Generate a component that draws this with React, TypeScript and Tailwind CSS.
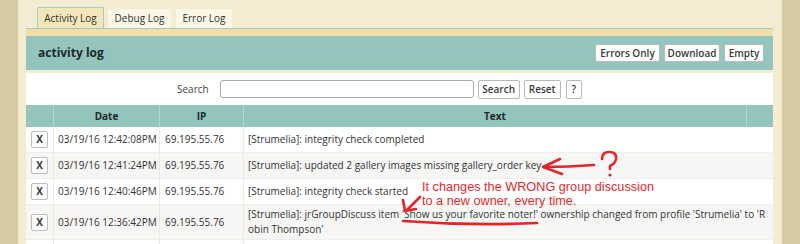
import React from "react";

const rows = [
  { d: "03/19/16 12:42:08PM", ip: "69.195.55.76", t: ["[Strumelia]: integrity check completed"], gray: false, h: "h-[26px]" },
  { d: "03/19/16 12:41:24PM", ip: "69.195.55.76", t: ["[Strumelia]: updated 2 gallery images missing gallery_order key"], gray: true, h: "h-[26px]" },
  { d: "03/19/16 12:40:46PM", ip: "69.195.55.76", t: ["[Strumelia]: integrity check started"], gray: false, h: "h-[26px]" },
  {
    d: "03/19/16 12:36:42PM",
    ip: "69.195.55.76",
    t: [
      "[Strumelia]: jrGroupDiscuss item 'Show us your favorite noter!' ownership changed from profile 'Strumelia' to 'R",
      "obin Thompson'",
    ],
    gray: true,
    h: "h-[35px]",
  },
];

function Btn({ children, w }: { children: React.ReactNode; w: string }) {
  return (
    <div
      className={`${w} h-[18px] bg-white border border-[#b9b9b9] rounded-[2px] flex items-center justify-center text-[10px] font-semibold text-[#3a3a3a] leading-none`}
    >
      {children}
    </div>
  );
}

export default function App() {
  return (
    <div className="relative w-[800px] h-[244px] overflow-hidden flex bg-[#d6cba3] font-['Open_Sans',sans-serif]">
      <div className="w-[18px] shrink-0" />
      <div className="w-[764px] shrink-0 bg-[#f3ecd0] pl-[8px] pr-[9px] flex flex-col">
        {/* tabs */}
        <div className="h-[29px] shrink-0 flex items-end pl-[11px] gap-[4px] border-b border-[#9fcbc3]">
          <div className="w-[67px] h-[21px] bg-[#f3e6b8] border border-b-0 border-[#a3cec5] rounded-t-[2px] flex items-center justify-center text-[10px] text-[#333]">
            Activity Log
          </div>
          <div className="w-[63px] h-[19px] bg-[#fbf7e6] flex items-center justify-center text-[10px] text-[#333]">
            Debug Log
          </div>
          <div className="ml-[1px] w-[56px] h-[19px] bg-[#fbf7e6] flex items-center justify-center text-[10px] text-[#333]">
            Error Log
          </div>
        </div>
        <div className="h-[7px] shrink-0 bg-[#f2dea6]" />
        {/* title bar */}
        <div className="h-[34px] shrink-0 bg-[#93c4bd] flex items-center justify-between pl-[12px] pr-[9px]">
          <div className="text-[12px] font-bold text-[#1f2a2a]">activity log</div>
          <div className="flex gap-[4px]">
            <Btn w="w-[65px]">Errors Only</Btn>
            <Btn w="w-[56px]">Download</Btn>
            <Btn w="w-[40px]">Empty</Btn>
          </div>
        </div>
        <div className="h-[3px] shrink-0" />
        {/* white body */}
        <div className="flex-1 bg-white flex flex-col">
          <div className="h-[32px] shrink-0 flex items-center pl-[151px]">
            <span className="text-[10px] text-[#444]">Search</span>
            <div className="ml-[11px] w-[254px] h-[18px] border border-[#ababab] rounded-[3px] bg-white" />
            <div className="ml-[4px] flex gap-[4px]">
              <div className="w-[42px] h-[19px] border border-[#b9b9b9] rounded-[2px] flex items-center justify-center text-[10px] font-semibold text-[#3a3a3a]">
                Search
              </div>
              <div className="w-[37px] h-[19px] border border-[#b9b9b9] rounded-[2px] flex items-center justify-center text-[10px] font-semibold text-[#3a3a3a]">
                Reset
              </div>
              <div className="ml-[1px] w-[16px] h-[19px] border border-[#b9b9b9] rounded-[2px] flex items-center justify-center text-[10px] font-semibold text-[#3a3a3a]">
                ?
              </div>
            </div>
          </div>
          {/* table header */}
          <div className="h-[22px] shrink-0 flex bg-[#93c4bd] text-[10px] font-bold text-[#1f2a2a]">
            <div className="w-[28px] border-r border-[#b7d8d2]" />
            <div className="w-[106px] border-r border-[#b7d8d2] flex items-center justify-center">Date</div>
            <div className="w-[84px] border-r border-[#b7d8d2] flex items-center justify-center">IP</div>
            <div className="w-[503px] border-r border-[#b7d8d2] flex items-center justify-center">Text</div>
            <div className="flex-1" />
          </div>
          {rows.map((r, i) => (
            <div
              key={i}
              className={`${r.h} shrink-0 flex text-[10px] text-[#333] ${r.gray ? "bg-[#f6f6f4]" : "bg-white"} border-b border-[#eeeeea]`}
            >
              <div className="w-[28px] border-r border-[#efe9d6] flex items-center justify-center">
                <div className="w-[17px] h-[17px] border border-[#bdbdbd] rounded-[2px] bg-white flex items-center justify-center font-bold text-[10px] text-[#333]">
                  X
                </div>
              </div>
              <div className="w-[106px] border-r border-[#efe9d6] flex items-center pl-[4px] whitespace-nowrap">{r.d}</div>
              <div className="w-[84px] border-r border-[#efe9d6] flex items-center pl-[5px] whitespace-nowrap">{r.ip}</div>
              <div className="flex-1 flex flex-col justify-center pl-[4px] leading-[15px] whitespace-nowrap">
                {r.t.map((l, j) => (
                  <div key={j}>{l}</div>
                ))}
              </div>
            </div>
          ))}
          {/* next row, only its top edge is visible */}
          <div className="h-[26px] shrink-0 flex bg-white">
            <div className="w-[28px] border-r border-[#efe9d6] flex items-center justify-center">
              <div className="w-[17px] h-[17px] border border-[#bdbdbd] rounded-[2px] bg-white" />
            </div>
            <div className="w-[106px] border-r border-[#efe9d6]" />
            <div className="w-[84px] border-r border-[#efe9d6]" />
            <div className="flex-1" />
          </div>
        </div>
      </div>
      <div className="flex-1" />

      {/* red annotations */}
      <svg
        className="absolute left-0 top-0 pointer-events-none"
        width={800}
        height={244}
        viewBox="0 0 800 244"
        fill="none"
        stroke="#e4232b"
        strokeWidth={2.6}
        strokeLinecap="round"
        strokeLinejoin="round"
      >
        <path d="M594 165 Q570 167 544 167" />
        <path d="M560 159 L543 167 L562 174" />
        <path d="M602 159 Q602 152 609 152 Q617 152 616 159 Q615 164 610 166 L610 169" />
        <circle cx={610} cy={175} r={1.6} fill="#e4232b" stroke="none" />
        <path d="M420 197 L406 211" />
        <path d="M403 200 L405 211 L416 209" />
        <path d="M403 221 Q470 226 537 223" />
      </svg>
      <div className="absolute left-[422px] top-[180px] text-[12.7px] leading-[14px] text-[#e52a2c] font-['Liberation_Sans',Arial,sans-serif] whitespace-nowrap">
        <div>It changes the WRONG group discussion</div>
        <div>to a new owner, every time.</div>
      </div>
    </div>
  );
}
